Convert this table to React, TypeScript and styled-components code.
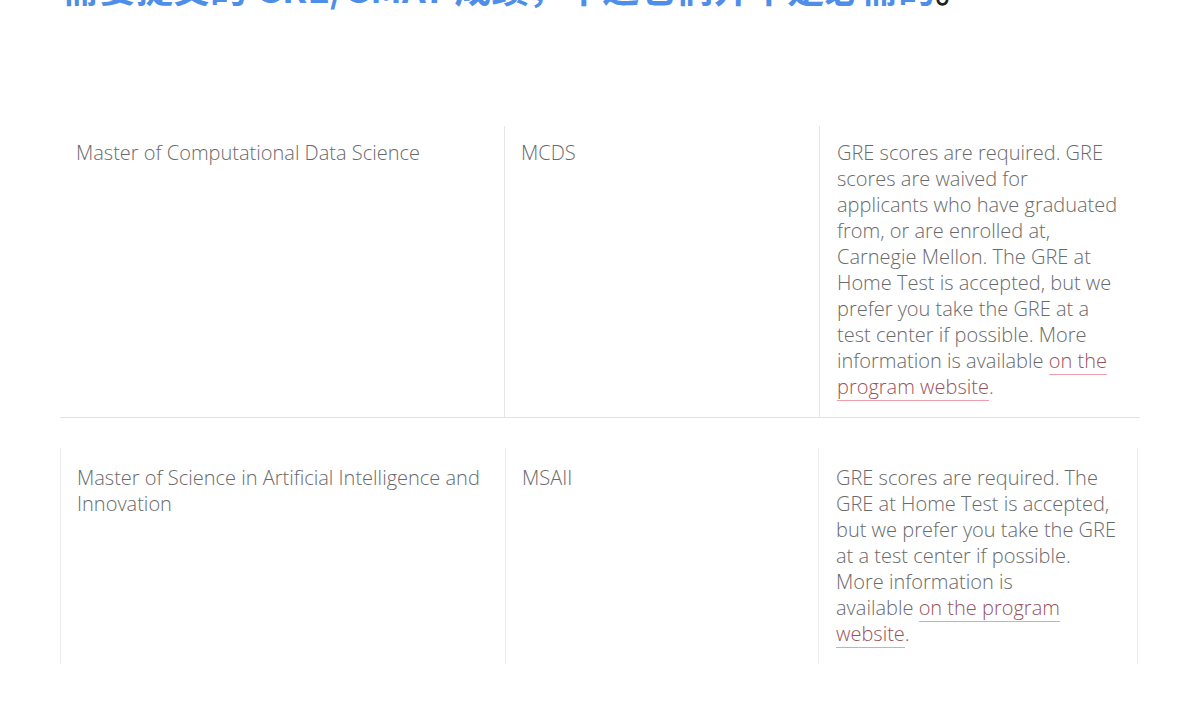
import React from "react";
import styled, { createGlobalStyle } from "styled-components";

const Global = createGlobalStyle`
  html, body { margin: 0; padding: 0; background: #ffffff; }
  body { font-family: "Open Sans", "Noto Sans", sans-serif; overflow: hidden; }
`;

const Page = styled.div`
  width: 1198px;
  height: 702px;
  overflow: hidden;
  padding: 0 58px 0 60px;
  box-sizing: border-box;
`;

const Heading = styled.p`
  margin: -31px 0 0 2px;
  height: 44px;
  font-family: "Noto Sans CJK SC", "Noto Sans", sans-serif;
  font-size: 37px;
  line-height: 37px;
  font-weight: 700;
  color: #222;
  white-space: nowrap;
`;

const Blue = styled.span`
  color: #4f8ee8;
`;

const Table = styled.div<{ $boxed?: boolean }>`
  display: grid;
  grid-template-columns: ${(p) => (p.$boxed ? "445px 313px 319px" : "445px 315px 320px")};
  width: ${(p) => (p.$boxed ? "1077px" : "1080px")};
  margin-top: ${(p) => (p.$boxed ? "30px" : "113px")};
  border-bottom: ${(p) => (p.$boxed ? "none" : "1px solid #e2e2e2")};
  border-left: ${(p) => (p.$boxed ? "1px solid #ececec" : "none")};
  box-sizing: border-box;
`;

const Cell = styled.div<{ $last?: boolean; $pl?: number; $pt?: number; $pr?: number }>`
  padding: ${(p) => p.$pt ?? 14}px ${(p) => p.$pr ?? 12}px 17px ${(p) => p.$pl ?? 16}px;
  font-size: 20px;
  line-height: 26px;
  font-weight: 300;
  color: #6a6a6a;
  border-right: ${(p) => (p.$last ? "none" : "1px solid #e6e6e6")};
`;

const BoxCell = styled(Cell)`
  border-right: 1px solid #ececec;
`;

const Link = styled.a`
  color: #9a525b;
  text-decoration: none;
  border-bottom: 1px solid #ef9fab;
`;

export default function App() {
  return (
    <>
      <Global />
      <Page>
        <Heading>
          <Blue>需要提交的 GRE/GMAT 成绩，不过它们并不是必需的</Blue>。
        </Heading>
        <Table>
          <Cell>Master of Computational Data Science</Cell>
          <Cell>MCDS</Cell>
          <Cell $last $pl={17} $pr={19}>
            GRE scores are required. GRE scores are waived for applicants who have graduated from, or are
            enrolled at, Carnegie Mellon. The GRE at Home Test is accepted, but we prefer you take the GRE at a
            test center if possible. More information is available{"\u00a0"}
            <Link href="#">on the program website</Link>.
          </Cell>
        </Table>
        <Table $boxed>
          <BoxCell $pt={17}>Master of Science in Artificial Intelligence and Innovation</BoxCell>
          <BoxCell $pt={17}>MSAII</BoxCell>
          <BoxCell $pt={17} $pl={17} $pr={19}>
            GRE scores are required. The GRE at Home Test is accepted, but we prefer you take the GRE at a test
            center if possible. More information is available{"\u00a0"}
            <Link href="#">on the program website</Link>.
          </BoxCell>
        </Table>
      </Page>
    </>
  );
}
